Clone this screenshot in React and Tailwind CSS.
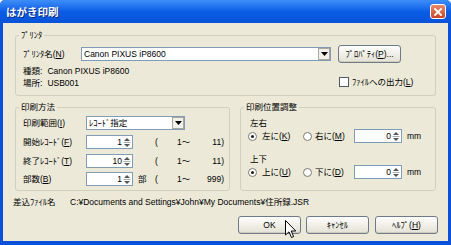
import React from "react";

const Acc = ({ k }) => (
  <>
    (<u>{k}</u>)
  </>
);

const GroupBox = ({ label, className, children }) => (
  <div className={`relative border border-[#d0d0bf] rounded-[3px] ${className}`}>
    <span className="absolute -top-[7px] left-[3px] px-[2px] bg-[#ece9d8] leading-[12px]">{label}</span>
    {children}
  </div>
);

const DropArrow = () => (
  <div className="w-[12px] h-[12px] bg-[#f1f0ea] border border-[#a9a79b] flex items-center justify-center">
    <svg width="7" height="4" viewBox="0 0 7 4">
      <polygon points="0,0 7,0 3.5,4" fill="#000" />
    </svg>
  </div>
);

const Combo = ({ text, w }) => (
  <div className={`${w} h-[14px] border border-[#7f9db9] bg-white flex items-center justify-between`}>
    <span className="pl-[2px] leading-[12px]">{text}</span>
    <DropArrow />
  </div>
);

const Spinner = ({ value, w }) => (
  <div className={`${w} h-[14px] border border-[#7f9db9] bg-white flex items-center`}>
    <span className="flex-1 text-right pr-[1px] leading-[12px]">{value}</span>
    <svg width="8" height="11" viewBox="0 0 8 11" className="mr-[1px]">
      <polygon points="4,1 7,4 1,4" fill="#555" />
      <line x1="0.5" y1="5.5" x2="7.5" y2="5.5" stroke="#aaa" strokeWidth="1" />
      <polygon points="1,7 7,7 4,10" fill="#555" />
    </svg>
  </div>
);

const Radio = ({ on }) => (
  <div className="w-[9px] h-[9px] rounded-full border border-[#7b7b74] bg-white flex items-center justify-center">
    {on && <div className="w-[3px] h-[3px] rounded-full bg-[#1f1f1f]" />}
  </div>
);

const Button = ({ children, w }) => (
  <div className={`${w} h-[18px] rounded-[3px] border border-[#6f7a88] bg-gradient-to-b from-[#fefefd] to-[#e4e1d4] shadow-[inset_0_-1px_0_#cfcbbd] flex items-center justify-center leading-[12px]`}>
    {children}
  </div>
);

export default function App() {
  return (
    <div className="w-[451px] h-[245px] relative overflow-hidden rounded-t-[5px] bg-[#0a50d8] flex flex-col whitespace-nowrap text-[8.5px] text-black font-['Liberation_Sans','Noto_Sans_CJK_JP',sans-serif]">
      {/* title bar */}
      <div className="h-[23px] shrink-0 flex items-center justify-between pl-[6px] pr-[5px] bg-gradient-to-b from-[#3d8ef7] via-[#0b5de6] to-[#0853d8]">
        <span className="text-white font-bold text-[10.5px] leading-[12px] [text-shadow:1px_1px_0_#0a2a80]">はがき印刷</span>
        <div className="w-[16px] h-[15px] rounded-[3px] border border-white bg-gradient-to-b from-[#e98a6c] to-[#c8432a] flex items-center justify-center">
          <svg width="8" height="8" viewBox="0 0 8 8">
            <path d="M1 1 L7 7 M7 1 L1 7" stroke="#fff" strokeWidth="1.8" strokeLinecap="square" />
          </svg>
        </div>
      </div>

      {/* body */}
      <div className="mx-[3px] mb-[4px] flex-1 bg-[#ece9d8] flex flex-col">
        {/* printer */}
        <GroupBox label="ﾌﾟﾘﾝﾀ" className="ml-[12px] mt-[12px] w-[421px] h-[61px] shrink-0">
          <div className="pt-[10px] pl-[7px] flex items-center h-[26px]">
            <span className="w-[58px] leading-[12px]">
              ﾌﾟﾘﾝﾀ名<Acc k="N" />
            </span>
            <Combo text="Canon PIXUS iP8600" w="w-[250px]" />
            <div className="ml-[7px]">
              <Button w="w-[63px]">
                ﾌﾟﾛﾊﾟﾃｨ<Acc k="P" />...
              </Button>
            </div>
          </div>
          <div className="flex pl-[7px] mt-[3px]">
            <div className="flex flex-col w-[316px] shrink-0">
              <div className="h-[12px] leading-[12px] flex">
                <span>種類:</span>
                <span className="ml-[5px]">Canon PIXUS iP8600</span>
              </div>
              <div className="h-[13px] leading-[13px] flex">
                <span>場所:</span>
                <span className="ml-[5px]">USB001</span>
              </div>
            </div>
            <div className="mt-[11px] flex items-center h-[12px]">
              <div className="w-[10px] h-[10px] border border-[#4f5a66] bg-white" />
              <span className="ml-[3px] leading-[12px]">
                ﾌｧｲﾙへの出力<Acc k="L" />
              </span>
            </div>
          </div>
        </GroupBox>

        <div className="flex ml-[12px] mt-[11px]">
          {/* print method */}
          <GroupBox label="印刷方法" className="w-[215px] h-[84px]">
            <div className="pl-[7px] pt-[8px] flex flex-col">
              <div className="flex items-center h-[14px]">
                <span className="w-[63px]">
                  印刷範囲<Acc k="I" />
                </span>
                <Combo text="ﾚｺｰﾄﾞ指定" w="w-[99px]" />
              </div>
              <div className="flex items-center h-[14px] mt-[5px]">
                <span className="w-[63px]">
                  開始ﾚｺｰﾄﾞ<Acc k="F" />
                </span>
                <Spinner value="1" w="w-[47px]" />
                <span className="w-[22px]" />
                <span className="w-[22px]">(</span>
                <span className="w-[18px]">1～</span>
                <span className="w-[29px] text-right">11)</span>
              </div>
              <div className="flex items-center h-[14px] mt-[5px]">
                <span className="w-[63px]">
                  終了ﾚｺｰﾄﾞ<Acc k="T" />
                </span>
                <Spinner value="10" w="w-[47px]" />
                <span className="w-[22px]" />
                <span className="w-[22px]">(</span>
                <span className="w-[18px]">1～</span>
                <span className="w-[29px] text-right">11)</span>
              </div>
              <div className="flex items-center h-[14px] mt-[4px]">
                <span className="w-[63px]">
                  部数<Acc k="B" />
                </span>
                <Spinner value="1" w="w-[47px]" />
                <span className="w-[22px] pl-[5px]">部</span>
                <span className="w-[22px]">(</span>
                <span className="w-[18px]">1～</span>
                <span className="w-[29px] text-right">999)</span>
              </div>
            </div>
          </GroupBox>

          {/* position */}
          <GroupBox label="印刷位置調整" className="ml-[10px] w-[196px] h-[84px]">
            <div className="pt-[9px] flex flex-col">
              <div className="pl-[9px] h-[12px] leading-[12px]">左右</div>
              <div className="pl-[7px] flex items-center h-[14px]">
                <div className="w-[55px] flex items-center">
                  <Radio on />
                  <span className="ml-[5px]">
                    左に<Acc k="K" />
                  </span>
                </div>
                <div className="w-[51px] flex items-center">
                  <Radio />
                  <span className="ml-[3px]">
                    右に<Acc k="M" />
                  </span>
                </div>
                <Spinner value="0" w="w-[48px]" />
                <span className="ml-[5px]">mm</span>
              </div>
              <div className="pl-[9px] h-[12px] leading-[12px] mt-[10px]">上下</div>
              <div className="pl-[7px] flex items-center h-[14px]">
                <div className="w-[55px] flex items-center">
                  <Radio on />
                  <span className="ml-[5px]">
                    上に<Acc k="U" />
                  </span>
                </div>
                <div className="w-[51px] flex items-center">
                  <Radio />
                  <span className="ml-[3px]">
                    下に<Acc k="D" />
                  </span>
                </div>
                <Spinner value="0" w="w-[48px]" />
                <span className="ml-[5px]">mm</span>
              </div>
            </div>
          </GroupBox>
        </div>

        {/* file name */}
        <div className="flex items-center h-[12px] mt-[5px] ml-[10px] leading-[12px]">
          <span className="w-[57px]">差込ﾌｧｲﾙ名</span>
          <span>C:¥Documents and Settings¥John¥My Documents¥住所録.JSR</span>
        </div>

        {/* buttons */}
        <div className="flex mt-[8px] ml-[235px]">
          <Button w="w-[63px]">OK</Button>
          <div className="ml-[5px]">
            <Button w="w-[63px]">ｷｬﾝｾﾙ</Button>
          </div>
          <div className="ml-[6px]">
            <Button w="w-[63px]">
              ﾍﾙﾌﾟ<Acc k="H" />
            </Button>
          </div>
        </div>
      </div>

      {/* mouse pointer */}
      <svg className="absolute left-[285px] top-[220px]" width="12" height="19" viewBox="0 0 12 19">
        <path d="M0.5 0.5 L0.5 15 L4 11.8 L6.5 17.5 L8.6 16.6 L6.2 11 L10.8 11 Z" fill="#fff" stroke="#000" strokeWidth="1" strokeLinejoin="miter" />
      </svg>
    </div>
  );
}
